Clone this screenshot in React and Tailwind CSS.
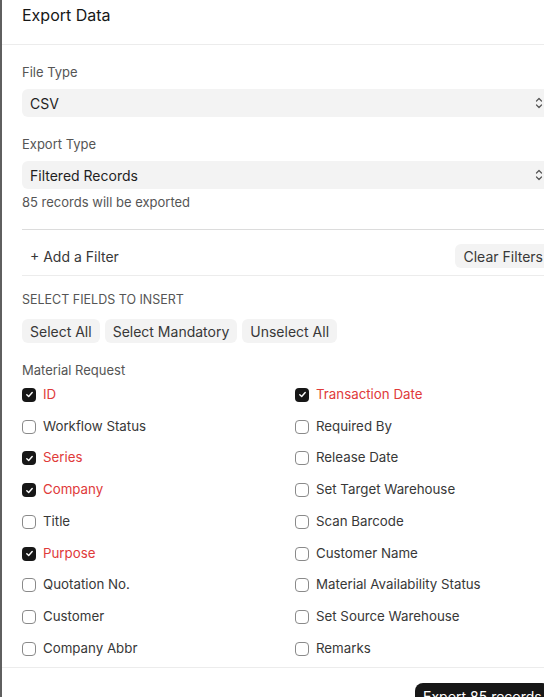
import React from "react";

const left = [
  ["ID", true],
  ["Workflow Status", false],
  ["Series", true],
  ["Company", true],
  ["Title", false],
  ["Purpose", true],
  ["Quotation No.", false],
  ["Customer", false],
  ["Company Abbr", false],
];
const right = [
  ["Transaction Date", true],
  ["Required By", false],
  ["Release Date", false],
  ["Set Target Warehouse", false],
  ["Scan Barcode", false],
  ["Customer Name", false],
  ["Material Availability Status", false],
  ["Set Source Warehouse", false],
  ["Remarks", false],
];

function Check({ label, on }) {
  return (
    <div className="flex items-center h-[31.75px] gap-[7px]">
      {on ? (
        <span className="w-[14px] h-[14px] rounded-[4px] bg-[#171717] flex items-center justify-center">
          <svg width="9" height="9" viewBox="0 0 10 10" fill="none">
            <path d="M2 5.2 L4.1 7.2 L8 2.8" stroke="white" strokeWidth="1.6" strokeLinecap="round" strokeLinejoin="round" />
          </svg>
        </span>
      ) : (
        <span className="w-[14px] h-[14px] rounded-[4px] border border-[#8a8a8a] bg-white" />
      )}
      <span className={"text-[13.3px] " + (on ? "text-[#e03a3a]" : "text-[#383838]")}>{label}</span>
    </div>
  );
}

function Select({ value }) {
  return (
    <div className="h-[28px] rounded-[6px] bg-[#f3f3f3] flex items-center justify-between pl-[8px] pr-[6px] text-[14px] text-[#1f1f1f]">
      <span>{value}</span>
      <svg width="8" height="12" viewBox="0 0 8 12" fill="none">
        <path d="M1.5 4 L4 1.5 L6.5 4" stroke="#555" strokeWidth="1.2" strokeLinecap="round" strokeLinejoin="round" />
        <path d="M1.5 8 L4 10.5 L6.5 8" stroke="#555" strokeWidth="1.2" strokeLinecap="round" strokeLinejoin="round" />
      </svg>
    </div>
  );
}

export default function App() {
  return (
    <div className="w-[544px] h-[697px] overflow-hidden bg-[#5f5f5f]" style={{ fontFamily: "Inter, 'Noto Sans', sans-serif" }}>
      <div className="ml-[2px] w-[567px] min-h-[697px] bg-white">
        <div className="h-[45px] border-b border-[#ececec] px-[20px] pt-[4px]">
          <h1 className="text-[16px] text-[#171717] leading-[22px]">Export Data</h1>
        </div>
        <div className="px-[20px] pt-[18px]">
          <div className="text-[13px] text-[#555] leading-[18px]">File Type</div>
          <div className="mt-[8px]"><Select value="CSV" /></div>
          <div className="text-[13px] text-[#555] leading-[18px] mt-[18px]">Export Type</div>
          <div className="mt-[8px]"><Select value="Filtered Records" /></div>
          <div className="text-[13px] text-[#555] leading-[18px] mt-[4px]">85 records will be exported</div>
          <div className="mt-[18px] border-t border-[#dcdcdc]" />
          <div className="pt-[14px] pb-[7px] flex items-center justify-between border-b border-[#ececec]">
            <span className="pl-[8px] text-[14px] text-[#383838]">+ Add a Filter</span>
            <span className="h-[24px] rounded-[6px] bg-[#f3f3f3] px-[8px] flex items-center text-[14px] text-[#383838] mr-[-2px]">Clear Filters</span>
          </div>
          <div className="mt-[16px] text-[12.5px] text-[#555] leading-[16px]">SELECT FIELDS TO INSERT</div>
          <div className="mt-[11px] flex gap-[5px]">
            {["Select All", "Select Mandatory", "Unselect All"].map((b) => (
              <span key={b} className="h-[24px] rounded-[6px] bg-[#f3f3f3] px-[8px] flex items-center text-[14px] text-[#383838]">{b}</span>
            ))}
          </div>
          <div className="mt-[18px] text-[13px] text-[#555] leading-[18px]">Material Request</div>
          <div className="grid grid-cols-[273px_1fr]">
            <div className="flex flex-col">
              {left.map(([l, on]) => <Check key={l} label={l} on={on} />)}
            </div>
            <div className="flex flex-col">
              {right.map(([l, on]) => <Check key={l} label={l} on={on} />)}
            </div>
          </div>
        </div>
        <div className="mt-[2px] border-t border-[#ececec] pl-[413px] pt-[15px]">
          <div className="inline-flex h-[28px] rounded-[8px] bg-[#171717] text-white text-[14px] px-[8px] items-center whitespace-nowrap">Export 85 records</div>
        </div>
      </div>
    </div>
  );
}
